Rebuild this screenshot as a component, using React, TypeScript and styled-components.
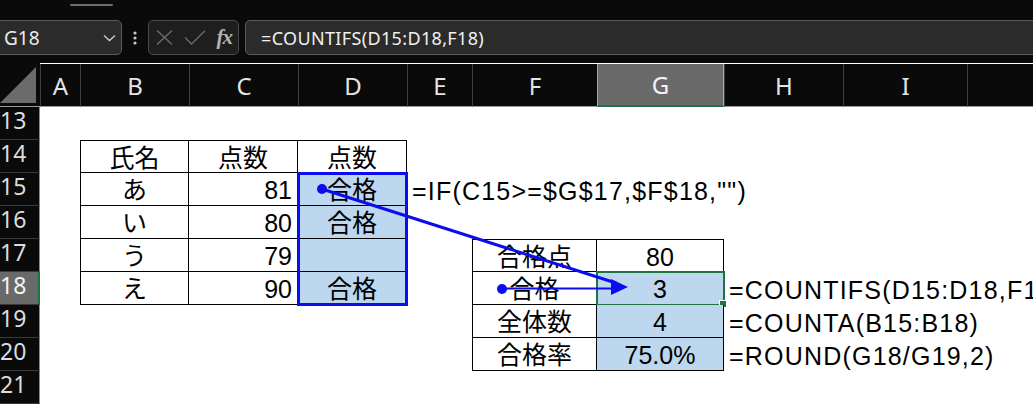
import React from 'react';
import styled, { createGlobalStyle, css } from 'styled-components';

const GlobalStyle = createGlobalStyle`
  html, body {
    margin: 0;
    padding: 0;
    background: #0a0a0a;
    overflow: hidden;
  }
`;

const UI_FONT = `"Noto Sans", "Noto Sans CJK JP", sans-serif`;
const CELL_FONT = `"Liberation Sans", "Noto Sans CJK JP", sans-serif`;

const Screen = styled.div`
  position: relative;
  width: 1033px;
  height: 404px;
  overflow: hidden;
  background: #0a0a0a;
  font-family: ${UI_FONT};
`;

/* ---------- ribbon edge + formula bar ---------- */

const TopStrip = styled.div`
  height: 20px;
  display: flex;
  align-items: flex-start;
`;

const ScrollThumb = styled.div`
  margin: 4px 0 0 70px;
  width: 43px;
  height: 2px;
  border-radius: 1px;
  background: #6e6e6e;
`;

const FormulaBar = styled.div`
  display: flex;
  height: 35px;
  margin-bottom: 8px;
`;

const NameBox = styled.div`
  box-sizing: border-box;
  width: 128px;
  margin-left: -6px;
  padding: 0 5px 0 9px;
  display: flex;
  align-items: center;
  justify-content: space-between;
  border: 1px solid #5a5a5a;
  border-radius: 5px;
  background: #2b2b2b;
  color: #ececec;
  font-size: 19px;
`;

const Grip = styled.div`
  width: 26px;
  display: flex;
  align-items: center;
  justify-content: center;
`;

const FxBox = styled.div`
  box-sizing: border-box;
  width: 91px;
  padding: 0 6px 0 7px;
  display: flex;
  align-items: center;
  justify-content: space-between;
  border: 1px solid #4a4a4a;
  border-radius: 5px;
  background: #1e1e1e;
`;

const FxLabel = styled.span`
  font-family: "Liberation Serif", "DejaVu Serif", serif;
  font-style: italic;
  font-weight: bold;
  font-size: 21px;
  color: #b4b4b4;
  letter-spacing: -1px;
`;

const FormulaInput = styled.div`
  flex: 1;
  margin: 0 -10px 0 6px;
  padding-left: 15px;
  display: flex;
  align-items: center;
  border: 1px solid #5a5a5a;
  border-radius: 5px;
  background: #2b2b2b;
  color: #f0f0f0;
  font-size: 18px;
  letter-spacing: 0.35px;
  white-space: nowrap;
`;

/* ---------- worksheet ---------- */

const columns = [
  { key: 'A', width: 40 },
  { key: 'B', width: 109 },
  { key: 'C', width: 109 },
  { key: 'D', width: 109 },
  { key: 'E', width: 65 },
  { key: 'F', width: 125 },
  { key: 'G', width: 127 },
  { key: 'H', width: 119 },
  { key: 'I', width: 124 },
  { key: 'J', width: 0 },
];

const colIndex = (key: string) => columns.findIndex((c) => c.key === key) + 2;

const Sheet = styled.div`
  display: grid;
  grid-template-columns: 40px ${columns
      .slice(0, -1)
      .map((c) => `${c.width}px`)
      .join(' ')} 1fr;
  grid-template-rows: 44px repeat(9, 33px);
  background: #ffffff;
`;

const Corner = styled.div`
  grid-column: 1;
  grid-row: 1;
  background: #0a0a0a;
  border-bottom: 1px solid #9a9a9a;
  display: flex;
  align-items: flex-end;
  padding-bottom: 3px;
  box-sizing: border-box;
`;

const CornerTriangle = styled.div`
  width: 36px;
  height: 36px;
  background: #6b6b6b;
  clip-path: polygon(100% 0, 100% 100%, 0 100%);
`;

const ColHeader = styled.div<{ $col: number; $active?: boolean }>`
  grid-column: ${(p) => p.$col};
  grid-row: 1;
  box-sizing: border-box;
  margin-top: 1px;
  display: flex;
  align-items: center;
  justify-content: center;
  background: #0a0a0a;
  color: #e4e4e4;
  font-size: 24px;
  border-left: 1px solid #3e3e3e;
  border-bottom: 1px solid #9a9a9a;
  ${(p) =>
    p.$active &&
    css`
      background: #6a6a6a;
      color: #f4f4f4;
      border-left-color: #a8a8a8;
      border-right: 1px solid #a8a8a8;
      border-bottom: 2px solid #217346;
    `}
`;

const RowHeader = styled.div<{ $row: number; $active?: boolean }>`
  grid-column: 1;
  grid-row: ${(p) => p.$row};
  box-sizing: border-box;
  display: flex;
  align-items: flex-start;
  padding-left: 0;
  background: #0a0a0a;
  color: #dcdcdc;
  font-size: 23px;
  line-height: 26px;
  border-bottom: 1px solid #3a3a3a;
  border-right: 1px solid #8a8a8a;
  ${(p) =>
    p.$active &&
    css`
      background: #6a6a6a;
      color: #f4f4f4;
      border-right: 2px solid #217346;
    `}
`;

type Align = 'left' | 'center' | 'right';

const Cell = styled.div<{
  $col: number;
  $row: number;
  $span?: boolean;
  $align?: Align;
  $fill?: boolean;
  $boxed?: boolean;
  $top?: boolean;
  $left?: boolean;
  $selected?: boolean;
}>`
  position: relative;
  grid-column: ${(p) => (p.$span ? `${p.$col} / -1` : p.$col)};
  grid-row: ${(p) => p.$row};
  box-sizing: border-box;
  display: flex;
  align-items: center;
  justify-content: ${(p) =>
    p.$align === 'right' ? 'flex-end' : p.$align === 'center' ? 'center' : 'flex-start'};
  padding: 3px 5px 0;
  overflow: hidden;
  white-space: nowrap;
  font-family: ${CELL_FONT};
  font-size: 25px;
  line-height: 1;
  letter-spacing: ${(p) => (p.$span ? '1.2px' : '0')};
  color: #000;
  background: ${(p) => (p.$fill ? '#bdd7ee' : 'transparent')};
  ${(p) =>
    p.$boxed &&
    css`
      border-right: 1px solid #000;
      border-bottom: 1px solid #000;
    `}
  ${(p) => p.$top && 'border-top: 1px solid #000;'}
  ${(p) => p.$left && 'border-left: 1px solid #000;'}
  ${(p) =>
    p.$selected &&
    css`
      overflow: visible;
      outline: 2px solid #217346;
      outline-offset: -1px;
      &::after {
        content: '';
        position: absolute;
        right: -4px;
        bottom: -4px;
        width: 6px;
        height: 6px;
        background: #217346;
        border: 1px solid #fff;
      }
    `}
`;

const Overlay = styled.svg`
  position: absolute;
  left: 0;
  top: 0;
  pointer-events: none;
`;

type CellData = {
  ref: string;
  text: string;
  align?: Align;
  fill?: boolean;
  boxed?: boolean;
  top?: boolean;
  left?: boolean;
  span?: boolean;
  selected?: boolean;
};

const cells: CellData[] = [
  { ref: 'B14', text: '氏名', align: 'center', boxed: true, top: true, left: true },
  { ref: 'C14', text: '点数', align: 'center', boxed: true, top: true },
  { ref: 'D14', text: '点数', align: 'center', boxed: true, top: true },
  { ref: 'B15', text: 'あ', align: 'center', boxed: true, left: true },
  { ref: 'C15', text: '81', align: 'right', boxed: true },
  { ref: 'D15', text: '合格', align: 'center', boxed: true, fill: true },
  { ref: 'E15', text: '=IF(C15>=$G$17,$F$18,"")', span: true },
  { ref: 'B16', text: 'い', align: 'center', boxed: true, left: true },
  { ref: 'C16', text: '80', align: 'right', boxed: true },
  { ref: 'D16', text: '合格', align: 'center', boxed: true, fill: true },
  { ref: 'B17', text: 'う', align: 'center', boxed: true, left: true },
  { ref: 'C17', text: '79', align: 'right', boxed: true },
  { ref: 'D17', text: '', align: 'center', boxed: true, fill: true },
  { ref: 'F17', text: '合格点', align: 'center', boxed: true, top: true, left: true },
  { ref: 'G17', text: '80', align: 'center', boxed: true, top: true },
  { ref: 'B18', text: 'え', align: 'center', boxed: true, left: true },
  { ref: 'C18', text: '90', align: 'right', boxed: true },
  { ref: 'D18', text: '合格', align: 'center', boxed: true, fill: true },
  { ref: 'F18', text: '合格', align: 'center', boxed: true, left: true },
  { ref: 'G18', text: '3', align: 'center', boxed: true, fill: true, selected: true },
  { ref: 'H18', text: '=COUNTIFS(D15:D18,F18)', span: true },
  { ref: 'F19', text: '全体数', align: 'center', boxed: true, left: true },
  { ref: 'G19', text: '4', align: 'center', boxed: true, fill: true },
  { ref: 'H19', text: '=COUNTA(B15:B18)', span: true },
  { ref: 'F20', text: '合格率', align: 'center', boxed: true, left: true },
  { ref: 'G20', text: '75.0%', align: 'center', boxed: true, fill: true },
  { ref: 'H20', text: '=ROUND(G18/G19,2)', span: true },
];

const FIRST_ROW = 13;
const rowNumbers = Array.from({ length: 9 }, (_, i) => FIRST_ROW + i);

const parseRef = (ref: string) => ({
  col: colIndex(ref[0]),
  row: parseInt(ref.slice(1), 10) - FIRST_ROW + 2,
});

const TRACE = '#0c0cf0';

const App: React.FC = () => (
  <Screen>
    <GlobalStyle />
    <TopStrip>
      <ScrollThumb />
    </TopStrip>

    <FormulaBar>
      <NameBox>
        <span>G18</span>
        <svg width="13" height="8" viewBox="0 0 13 8">
          <path d="M1 1.5 L6.5 6.5 L12 1.5" fill="none" stroke="#cfcfcf" strokeWidth="1.3" />
        </svg>
      </NameBox>
      <Grip>
        <svg width="4" height="14" viewBox="0 0 4 14">
          <circle cx="2" cy="2" r="1.6" fill="#c8c8c8" />
          <circle cx="2" cy="7" r="1.6" fill="#c8c8c8" />
          <circle cx="2" cy="12" r="1.6" fill="#c8c8c8" />
        </svg>
      </Grip>
      <FxBox>
        <svg width="17" height="15" viewBox="0 0 17 15">
          <path d="M1 0.5 L16 14.5 M16 0.5 L1 14.5" stroke="#6a6a6a" strokeWidth="1.4" />
        </svg>
        <svg width="22" height="15" viewBox="0 0 22 15">
          <path d="M1 7.5 L7.5 14 L21 0.8" fill="none" stroke="#6a6a6a" strokeWidth="1.4" />
        </svg>
        <FxLabel>fx</FxLabel>
      </FxBox>
      <FormulaInput>=COUNTIFS(D15:D18,F18)</FormulaInput>
    </FormulaBar>

    <Sheet>
      <Corner>
        <CornerTriangle />
      </Corner>
      {columns.map((c, i) => (
        <ColHeader key={c.key} $col={i + 2} $active={c.key === 'G'}>
          {c.key === 'J' ? '' : c.key}
        </ColHeader>
      ))}
      {rowNumbers.map((n, i) => (
        <RowHeader key={n} $row={i + 2} $active={n === 18}>
          {n}
        </RowHeader>
      ))}
      {cells.map((c) => {
        const { col, row } = parseRef(c.ref);
        return (
          <Cell
            key={c.ref}
            $col={col}
            $row={row}
            $span={c.span}
            $align={c.align}
            $fill={c.fill}
            $boxed={c.boxed}
            $top={c.top}
            $left={c.left}
            $selected={c.selected}
          >
            {c.text}
          </Cell>
        );
      })}
    </Sheet>

    {/* precedents trace: range box on D15:D18 and arrows into G18 */}
    <Overlay width="1033" height="404" viewBox="0 0 1033 404">
      <rect x="298.5" y="173.5" width="108" height="131" fill="none" stroke={TRACE} strokeWidth="3" />
      <line x1="322" y1="189" x2="616" y2="283" stroke={TRACE} strokeWidth="3" />
      <circle cx="322" cy="189" r="5" fill={TRACE} />
      <line x1="502" y1="288.5" x2="614" y2="288.5" stroke={TRACE} strokeWidth="2" />
      <circle cx="502" cy="289" r="5" fill={TRACE} />
      <polygon points="611,279 628,287 611,295" fill={TRACE} />
    </Overlay>
  </Screen>
);

export default App;
